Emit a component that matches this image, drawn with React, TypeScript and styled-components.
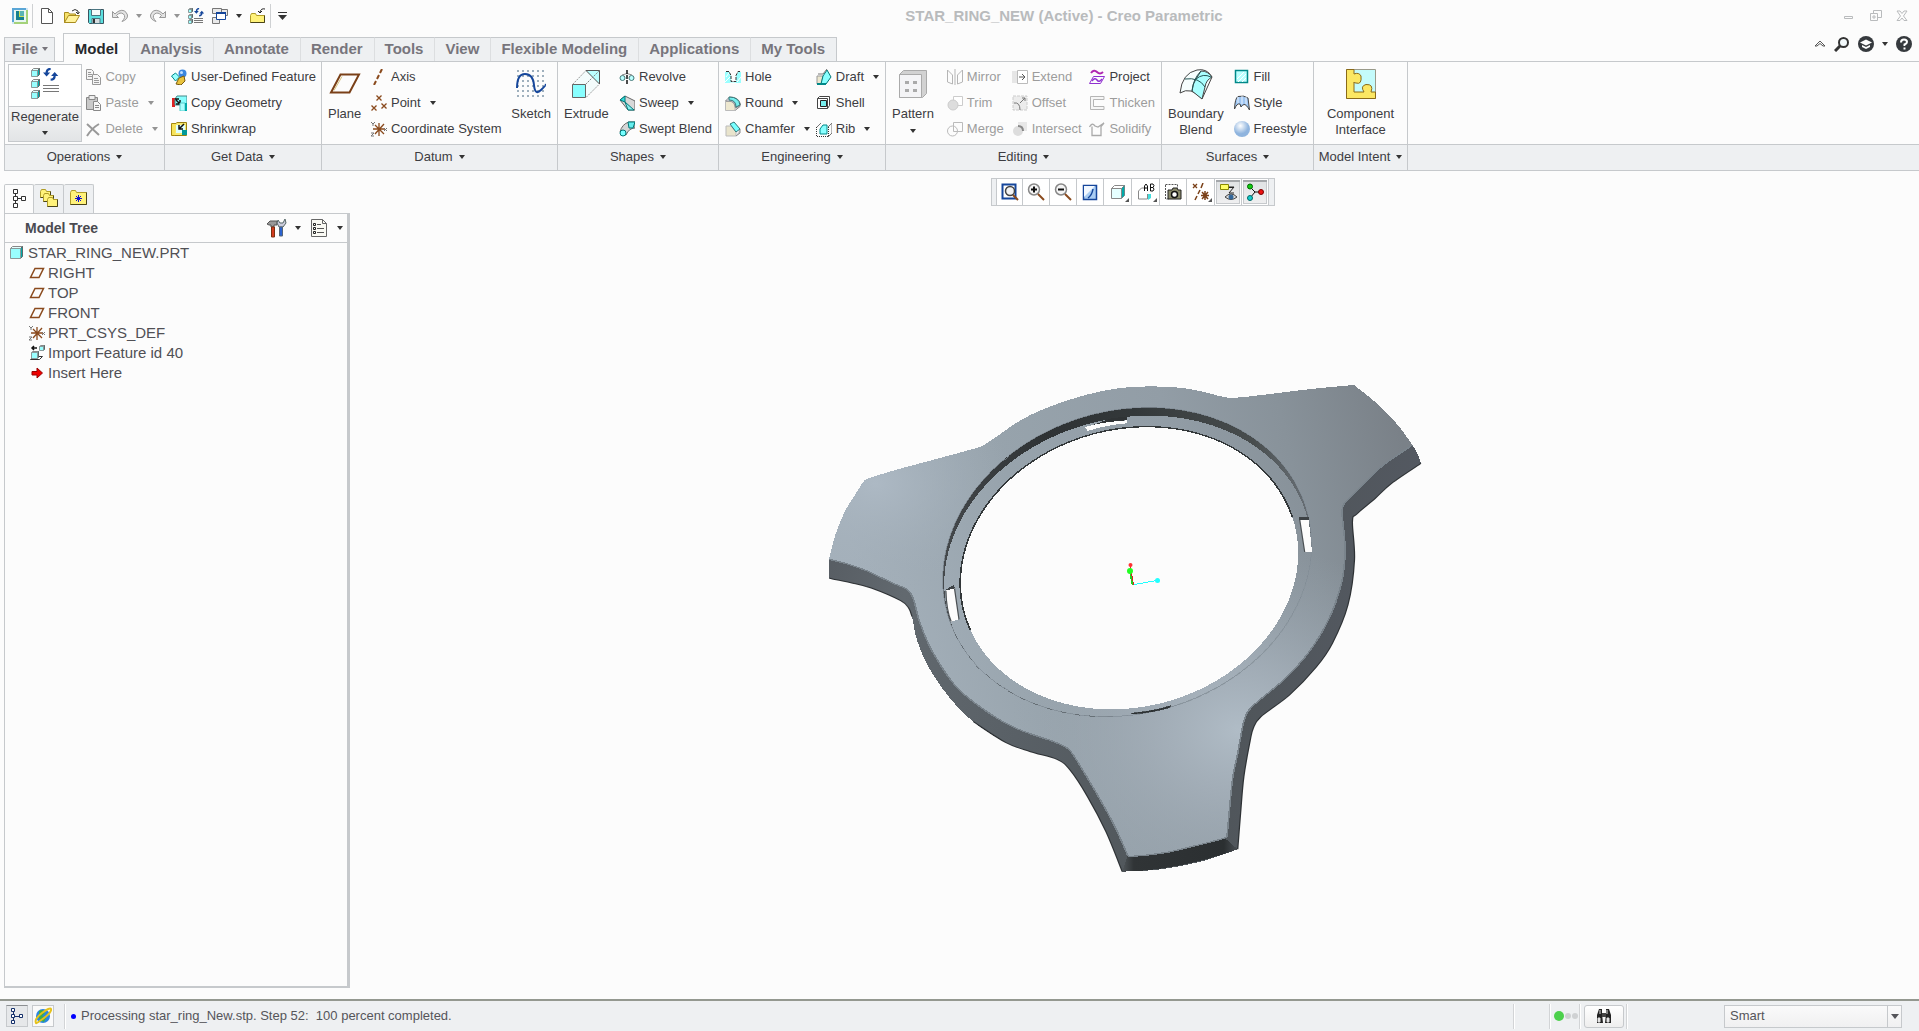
import React from "react";
import styled, { createGlobalStyle, css } from "styled-components";

const color = {
  page: "#fcfcfc",
  band: "#eef0f2",
  line: "#c6c9cc",
  text: "#3d3d42",
  tab: "#77757c",
  faded: "#9c9c9c",
};

const GlobalStyle = createGlobalStyle`
  * { box-sizing: border-box; }
  body { margin: 0; background: ${color.page}; color: ${color.text};
    font-family: "Liberation Sans", Arial, sans-serif; font-size: 13px; line-height: 16px; }
  button { font: inherit; color: inherit; background: none; border: 0; padding: 0; margin: 0; }
  svg { display: block; flex: none; }
`;

/* ---------- drawing helpers ---------- */

type Pt = [number, number];

/** Smooth open curve through points, as the tail of a path that already is at points[0]. */
const through = (p: Pt[]) => {
  let d = "";
  for (let i = 0; i < p.length - 1; i++) {
    const a = p[i - 1] ?? p[i];
    const b = p[i];
    const c = p[i + 1];
    const e = p[i + 2] ?? c;
    d += `C${b[0] + (c[0] - a[0]) / 6} ${b[1] + (c[1] - a[1]) / 6} ${c[0] - (e[0] - b[0]) / 6} ${
      c[1] - (e[1] - b[1]) / 6
    } ${c[0]} ${c[1]}`;
  }
  return d;
};
const edge = (p: Pt[]) => `M${p[0].join(" ")}` + through(p);

/** Closed outline made of smooth runs that meet in sharp corners. */
const outline = (...runs: Pt[][]) =>
  `M${runs[0][0].join(" ")}` + runs.map((r) => `L${r[0].join(" ")}` + through(r)).join("") + "Z";

/** Part of a tilted ellipse, from one angle to another in degrees. */
const arc = (cx: number, cy: number, rx: number, ry: number, skew: number, from: number, to: number): Pt[] => {
  const pts: Pt[] = [];
  for (let a = from; a <= to; a += 5) {
    const t = (a * Math.PI) / 180;
    pts.push([cx + rx * Math.cos(t), cy + ry * Math.cos(t - skew)]);
  }
  return pts;
};
const rimArc = (from: number, to: number) => arc(777, 576, 452, 464, 1.686, from, to);
const ledgeArc = (from: number, to: number) => arc(779, 589, 450, 452, 1.686, from, to);
const holeArc = (from: number, to: number) => arc(782, 594, 414, 424, 1.677, from, to);

const topLeft: Pt[] = [[140, 328], [150, 322], [215, 298], [300, 270], [390, 240], [430, 222], [520, 148], [605, 102], [705, 66], [790, 51], [885, 51], [955, 63], [1010, 80], [1045, 83], [1120, 73], [1220, 58], [1333, 45]];
const rightTip: Pt[] = [[1333, 45], [1393, 105], [1440, 165], [1476, 225]];
const rightCut: Pt[] = [[1476, 225], [1488, 250], [1497, 280]];
const leftTip: Pt[] = [[47, 565], [62, 495], [85, 425], [110, 375], [132, 333], [140, 328]];

const lowerRight: Pt[] = [[1497, 280], [1425, 340], [1385, 385], [1340, 432], [1329, 455], [1334, 570], [1318, 705], [1280, 820], [1240, 892], [1175, 975], [1105, 1040], [1086, 1075], [1078, 1115], [1063, 1220], [1055, 1330], [1048, 1438]];
const foot: Pt[] = [[1048, 1438], [960, 1474], [860, 1498], [765, 1505]];
const lowerLeft: Pt[] = [[765, 1505], [725, 1385], [680, 1280], [637, 1200], [605, 1168], [540, 1145], [480, 1118], [400, 1055], [340, 980], [290, 890], [262, 810], [250, 740], [242, 715], [222, 692], [150, 654], [100, 638], [47, 625]];

const faceRight: Pt[] = [[1476, 225], [1395, 295], [1322, 385], [1307, 405], [1304, 435], [1311, 540], [1302, 640], [1270, 750], [1220, 850], [1160, 930], [1085, 1008], [1064, 1050], [1048, 1150], [1035, 1230], [1022, 1395]];
const faceFoot: Pt[] = [[1022, 1395], [1014, 1405], [935, 1430], [870, 1448], [790, 1459], [778, 1455]];
const faceLeft: Pt[] = [[778, 1455], [745, 1365], [702, 1270], [645, 1155], [627, 1132], [595, 1114], [505, 1075], [430, 1022], [358, 950], [300, 845], [270, 760], [254, 690], [240, 660], [200, 638], [140, 603], [95, 583], [47, 568]];

const bodyPath = outline(topLeft, rightTip, rightCut, lowerRight, foot, lowerLeft, leftTip);
const facePath = outline(topLeft, rightTip, faceRight, faceFoot, faceLeft, leftTip);
const rimPath = outline(rimArc(0, 360));
const ledgePath = outline(ledgeArc(0, 360));
const holePath = outline(holeArc(0, 360));

const Ring = () => (
  <svg width="640" height="520" viewBox="3 0 640 520" shapeRendering="crispEdges" role="img" aria-label="Star ring part">
    <defs>
      <linearGradient id="metal" gradientUnits="userSpaceOnUse" x1="80" y1="420" x2="1440" y2="160">
        <stop offset="0" stopColor="#a5b1bb" />
        <stop offset="0.3" stopColor="#97a3ac" />
        <stop offset="0.6" stopColor="#929da6" />
        <stop offset="0.8" stopColor="#88929a" />
        <stop offset="1" stopColor="#7a8188" />
      </linearGradient>
      <radialGradient id="shine" gradientUnits="userSpaceOnUse" cx="1050" cy="1080" r="560">
        <stop offset="0" stopColor="#b0bcc6" />
        <stop offset="0.35" stopColor="#a5b0ba" stopOpacity="0.8" />
        <stop offset="1" stopColor="#98a3ac" stopOpacity="0" />
      </radialGradient>
      <radialGradient id="glow" gradientUnits="userSpaceOnUse" cx="160" cy="340" r="340">
        <stop offset="0" stopColor="#adb9c4" />
        <stop offset="1" stopColor="#9eaab4" stopOpacity="0" />
      </radialGradient>
      <linearGradient id="side" gradientUnits="userSpaceOnUse" x1="50" y1="600" x2="1400" y2="900">
        <stop offset="0" stopColor="#585e64" />
        <stop offset="0.14" stopColor="#62696f" />
        <stop offset="0.4" stopColor="#596066" />
        <stop offset="0.75" stopColor="#4f5559" />
        <stop offset="1" stopColor="#545962" />
      </linearGradient>
      <linearGradient id="wall" gradientUnits="userSpaceOnUse" x1="330" y1="600" x2="1220" y2="430">
        <stop offset="0" stopColor="#45494c" />
        <stop offset="0.35" stopColor="#2e3234" />
        <stop offset="0.6" stopColor="#33383a" />
        <stop offset="0.9" stopColor="#484d4e" />
        <stop offset="1" stopColor="#666d73" />
      </linearGradient>
      <linearGradient id="foot" gradientUnits="userSpaceOnUse" x1="765" y1="0" x2="1048" y2="0">
        <stop offset="0" stopColor="#50565a" />
        <stop offset="0.1" stopColor="#303436" />
        <stop offset="0.88" stopColor="#2b2f31" />
        <stop offset="1" stopColor="#4a4f54" />
      </linearGradient>
      <clipPath id="inRim"><path d={rimPath} /></clipPath>
    </defs>
    <g transform="scale(0.40816 0.33333)">
      <path d={bodyPath} fill="url(#side)" />
      <path d={edge(lowerRight) + edge(lowerLeft.slice(0, 8)) + edge(lowerLeft.slice(-6))} fill="none" stroke="#2e3235" strokeWidth="3" />
      <path d="M778 1459Q900 1450 1016 1404L1048 1438Q900 1502 765 1505Z" fill="url(#foot)" />
      <path d={facePath} fill="url(#metal)" />
      <path d={facePath} fill="url(#glow)" />
      <path d={facePath} fill="url(#shine)" />
      <path d={edge(faceRight) + through(faceFoot) + through(faceLeft)} fill="none" stroke="#7a848c" strokeWidth="4" />
      <path d={rimPath} fill="url(#wall)" />
      <g clipPath="url(#inRim)">
        <path d={ledgePath} fill="url(#metal)" />
        <path d={ledgePath} fill="url(#shine)" />
      </g>
      <path d={rimPath} fill="none" stroke="#848f98" strokeWidth="2" />
      <path d={edge(rimArc(100, 160))} fill="none" stroke="#5b6369" strokeWidth="2" strokeDasharray="14 22" />
      <path d={edge(rimArc(15, 75))} fill="none" stroke="#8a959d" strokeWidth="3" strokeDasharray="12 12" />
      <path d="M788 1030Q850 1022 884 1007L882 1012Q840 1028 788 1032Z" fill="#2d3133" stroke="#2d3133" strokeWidth="2" />
      <path d={holePath} fill={color.page} />
      <path d={edge(holeArc(-200, -15))} fill="none" stroke="#33383a" strokeWidth="4" />
      <path d="M740 144L777 140V150L677 172Z" fill="#2f3335" />
      <path d="M674 171Q720 155 777 151V160Q730 164 680 183Z" fill={color.page} />
      <path d="M1198 441H1222V450H1198ZM333 658L352 646L355 655L335 664Z" fill="#3d4245" />
      <path d="M1200 450H1222L1230 546H1212Z" fill={color.page} />
      <path d="M333 662L354 655L365 748L346 755Q334 720 333 662Z" fill={color.page} />
      <path d="M333 662Q334 720 346 755M354 655L365 748M1200 450L1212 546" fill="none" stroke="#4b5054" strokeWidth="3" />
    </g>
    <g fill="none">
      <path d="M323.500 215L320.500 196" stroke="#d22" />
      <path d="M322.500 215L320 202" stroke="#2c2" strokeWidth="1.500" />
      <path d="M324 214.500L347 210.500" stroke="#2ff" />
    </g>
    <g shapeRendering="auto">
      <circle cx="320.500" cy="195" r="2" fill="#f33" />
      <circle cx="320" cy="201" r="3" fill="#2f2" />
      <circle cx="347.500" cy="210.500" r="2.500" fill="#2ff" />
    </g>
  </svg>
);

/* ---------- icons ---------- */

const cube = (x: number, y: number, s: number) => {
  const d = Math.max(1, Math.round(s * 0.2));
  const f = s - d;
  return (
    <g>
      <path d={`M${x} ${y + d}l${d} ${-d}h${f}l${-d} ${d}z`} fill="#e4ffff" stroke="#888" />
      <path d={`M${x + f} ${y + d}l${d} ${-d}v${f}l${-d} ${d}z`} fill="#0aa" stroke="#5a6a6a" />
      <path d={`M${x} ${y + d}h${f}v${f}h${-f}z`} fill="#9ff" stroke="#8a9a9a" />
    </g>
  );
};
const lines = (x: number, y: number, w: number, gap: number) => (
  <path d={[0, 1, 2].map((i) => `M${x} ${y + i * gap}h${w}`).join("")} stroke="#777" fill="none" />
);
const cycle = (
  <>
    <path d="M8.500 1Q4 1 4 6M8.500 13Q13 13 13 8" fill="none" stroke="#15469b" strokeWidth="2.500" />
    <path d="M0 5h8L4 9.500zM9 9h8L13 4.500z" fill="#15469b" />
  </>
);
const xs = (pts: Pt[], r: number, c: string) => (
  <path d={pts.map(([x, y]) => `M${x - r} ${y - r}l${2 * r} ${2 * r}M${x + r} ${y - r}l${-2 * r} ${2 * r}`).join("")} stroke={c} strokeWidth="1.300" fill="none" />
);
const folder = (x: number, y: number, w: number, h: number) => (
  <>
    <path d={`M${x} ${y + 2}l1-2h4l1 2h${w - 6}v${h - 2}h${-w}z`} fill="#fff27a" stroke="#b09c28" />
    <path d={`M${x} ${y + h}h${w}v${2 - h}`} fill="none" stroke="#4a4418" />
  </>
);

const glyphs = {
  app: [16, 16, <><path d="M0 0h16v16H0z" fill="#cfe6f5" /><path d="M0 0h14v14H0z" fill="#5aa6d6" /><path d="M2 2h14v14H2z" fill="#a4d27a" /><path d="M2 2h12v12H2z" fill="#e8f6f2" /><path d="M4 3h8v9H4z" fill="#16808f" /><path d="M7 3h5v6H7z" fill="#c9e05a" /><path d="M8 3h4v5H8z" fill="#58b4b4" /></>],
  newFile: [16, 16, <path d="M1.500.5h7l4 4v11h-11zM8.500.5v4h4" fill="#fff" stroke="#555" />],
  open: [16, 16, <><path d="M.5 14.500v-10h4l1 1.500h6v8z" fill="#f7e26b" stroke="#a88b1e" /><path d="M.5 14.500l4-7h11l-4 7z" fill="#fff29b" stroke="#a88b1e" /><path d="M8 3q3-3 6 0v2m-2-1l2 2 1.500-2" fill="none" stroke="#333" /></>],
  save: [16, 16, <><path d="M.5 1.500h15v14h-14l-1-1z" fill="#5ce0e0" stroke="#3b5560" /><path d="M3.500 1.500h9v6h-9z" fill="#f4fbfb" stroke="#4a7480" /><path d="M4 10.500h8v5H4z" fill="#d6dde0" stroke="#4a7480" /><path d="M6 11v4" stroke="#333" strokeWidth="2" /></>],
  undo: [16, 16, <path d="M.5 3.500v6h6L4.500 7.500Q8 3.500 11.500 6q3 3-1.500 7.500 6-2 5.500-6.500Q13 .5 7 3 5 4 3 6z" fill="#e4e4e4" stroke="#999" />],
  redo: [16, 16, <path d="M15.500 3.500v6h-6l2-2Q8 3.500 4.500 6q-3 3 1.500 7.500Q0 11.500.5 7 3 .5 9 3q2 1 4 3z" fill="#e4e4e4" stroke="#999" />],
  regenSmall: [16, 16, <>{cube(0.5, 0.5, 4)}{cube(0.5, 6.5, 4)}{cube(0.5, 11.500, 4)}<g transform="translate(6 0) scale(.6)">{cycle}</g>{lines(6, 10.500, 9, 2)}</>],
  windows: [16, 16, <g fill="#e9e9e9" stroke="#777"><path d="M.5.5h9v5h-9zM9.500 1.500h6v6h-6zM.5 9.500h7v6h-7z" /><path d="M4.500 4.500h9v7h-9z" stroke="#15469b" fill="#fff" /><path d="M4 5h10" stroke="#15469b" strokeWidth="2" /></g>],
  closeFolder: [16, 16, <>{folder(0.5, 5.500, 14, 9)}<path d="M15 1Q11 0 10 4M8 3l2 2 2-2" fill="none" stroke="#222" /></>],
  customize: [10, 10, <><path d="M0 1.500h9" stroke="#333" /><path d="M0 4h9L4.500 9z" fill="#333" /></>],
  minimize: [12, 12, <path d="M1.500 6.500h8v2h-8z" fill="none" stroke="#b9bbbd" />],
  restore: [12, 12, <path d="M3.500 3V.5h8v7H8M.5 3.500h7v7h-7zM3 6h2v2H3z" fill="none" stroke="#b9bbbd" />],
  close: [12, 12, <path d="M1 1h3l2 2.500L8 1h3L7.500 6l3.500 4.500H8L6 8l-2 2.500H1L4.500 6z" fill="none" stroke="#b9bbbd" />],
  chevron: [12, 8, <path d="M1 6l5-5 5 5H9L6 3.500 3 6z" fill="none" stroke="#555" />],
  search: [16, 16, <><circle cx="9.500" cy="6.500" r="4.500" fill="#f3f9fb" stroke="#333" strokeWidth="2" /><path d="M6 10l-5 5" stroke="#333" strokeWidth="3" /></>],
  learn: [16, 16, <><circle cx="8" cy="8" r="8" fill="#363a3e" /><path d="M2 6.500l6-3 6 3-6 3z" fill="#fff" /><path d="M4 9l4 2 4-2v2l-4 2-4-2z" fill="#fff" /></>],
  help: [16, 16, <><circle cx="8" cy="8" r="8" fill="#363a3e" /><path d="M5 6.500Q5 3.500 8 3.500t3 2.500Q11 7.500 8.500 8.500V10" fill="none" stroke="#fff" strokeWidth="2" /><path d="M7.500 11.500h2v2h-2z" fill="#fff" /></>],
  regenerate: [30, 32, <>{cube(1.5, 0.500, 8)}{cube(1.5, 11.500, 8)}{cube(1.5, 22.500, 8)}<g transform="translate(13 0) scale(.9)">{cycle}</g>{lines(13, 17.500, 16, 3)}</>],
  copy: [16, 16, <g fill="#f5f5f5" stroke="#999"><path d="M1.500.5h5l2 2v8h-7zM3 3.500h3M3 5.500h4M3 7.500h4" /><path d="M7.500 5.500h5l3 3v7h-8zM9 9.500h4M9 11.500h5M9 13.500h5" /></g>],
  paste: [16, 16, <g stroke="#888"><path d="M1.500 2.500h11v12h-11z" fill="#c9c9c9" /><path d="M4 .5h6v4H4z" fill="#eee" /><path d="M8.500 6.500h4l3 3v6h-7zM10 10.500h4M10 12.500h4" fill="#f6f6f6" /></g>],
  delete: [16, 16, <path d="M2 3l12 11M14 3Q7 7 2 15" stroke="#999" strokeWidth="2" fill="none" />],
  udf: [16, 16, <><circle cx="11.500" cy="4.500" r="4" fill="#3a86e0" /><circle cx="10.500" cy="3.500" r="1.500" fill="#bfe0ff" /><path d="M.5 7l4-3 4 4-4 4z" fill="#9ff" stroke="#088" /><path d="M8 9l5-2 1 5-4 4-5-1z" fill="#e9c33d" stroke="#7a5a10" /></>],
  copyGeom: [16, 16, <><path d="M1 3h3v9H1z" fill="#d22" /><path d="M4 4l2-3h10v9H4z" fill="#8ff" stroke="#488" /><path d="M4 4h4M5 5l4 4M9 5v4H5" stroke="#111" strokeWidth="1.500" fill="none" /><path d="M9 8h5v8H9z" fill="#aff" stroke="#5cc" /><path d="M14 8h2v8h-2z" fill="#0aa" /></>],
  shrink: [16, 16, <><path d="M.5 2.500h9v12h-9z" fill="#f6e35a" stroke="#a5890e" /><path d="M5.500 1.500h10v13h-12" fill="#f8e96f" stroke="#997f10" /><path d="M5 4h9v8H5z" fill="#dff" /><path d="M13 3L8 8M8 4v4h4" stroke="#111" strokeWidth="1.500" fill="none" /><path d="M11 9h5v5h-5z" fill="#099" /></>],
  plane: [32, 32, <><path d="M2 24.500L11.500 6.500H30L20.500 24.500Z" fill="none" stroke="#7a4018" strokeWidth="2" /><path d="M5 22.500L13 8.500" stroke="#d8c27a" /></>],
  axis: [16, 16, <path d="M11 0L9 4M8 6L6 10M5 12L3 16" stroke="#8a4a1d" strokeWidth="2" fill="none" />],
  point: [16, 16, xs([[8, 3], [3, 13], [13, 11]], 2.500, "#8a4a1d")],
  csys: [16, 16, <><path d="M8 2v13M2 8h12M4 4l9 9M13 3L4 13" stroke="#8a4a1d" strokeWidth="1.300" fill="none" /><path d="M0 1l2 2 2-2M2 3v2M0 12h3l-3 3h3M13 7l3 3M16 7l-3 3" stroke="#777" fill="none" /></>],
  sketch: [30, 30, <><path d={[1, 6, 11, 16, 21, 26].map((y) => `M1 ${y + 1}H30`).join("")} stroke="#9fb0bd" strokeWidth="2" strokeDasharray="2 3" fill="none" /><path d="M1 19Q1 5 9 5T18 16t7 5 4-5" fill="none" stroke="#15469b" strokeWidth="2" /></>],
  extrude: [32, 32, <><path d="M2.500 16.500L16 2.500H29.500V16L15.500 30" fill="#f4fcfc" stroke="#999" strokeDasharray="2 1" /><path d="M16 2.500h13.500V16z" fill="#bff" stroke="#555" /><path d="M15.500 16.500L29 3" stroke="#888" strokeDasharray="2 1" /><path d="M2.500 16.500h13v13h-13z" fill="#8ff" stroke="#666" /></>],
  revolve: [16, 16, <><circle cx="3.500" cy="9" r="2.500" fill="#bff" stroke="#477" /><circle cx="12.500" cy="9" r="2.500" fill="#bff" stroke="#477" /><path d="M3 6q5-3 10 0" fill="none" stroke="#888" /><path d="M8 1v15" stroke="#111" strokeDasharray="4 1" strokeWidth="1.500" /></>],
  sweep: [16, 16, <><path d="M1 5l5-4 10 5v9H9z" fill="#d8d8d8" stroke="#666" /><path d="M1 5l5-4v6z" fill="#3dd" stroke="#077" /><path d="M6 7l9 8h-6z" fill="#8ee" stroke="#077" /></>],
  sweptBlend: [16, 16, <><path d="M1 11Q3 3 10 1h6v6q-6 0-9 7z" fill="#d5d5d5" stroke="#666" /><path d="M9 1h7l-2 6h-4z" fill="#6ee" stroke="#077" /><circle cx="4" cy="12" r="3" fill="#7ff" stroke="#077" /></>],
  hole: [16, 16, <><path d="M0 3h4l2 4v6h5V7l2-4h3v11H0z" fill="#9ff" /><path d="M0 13L5 8M1 8l3-4M12 13l4-5M5 14h6" stroke="#fff" /><path d="M1 2.500h3l2 4v6h5v-6l2-4h3" stroke="#333" strokeDasharray="3 1" fill="none" /></>],
  round: [16, 16, <><path d="M10 15.500l5-4V8" fill="#ccc" stroke="#888" /><path d="M.5 6.500H6q4 1 4 6v3H.5z" fill="#eee8d0" stroke="#bbb" /><path d="M.5 6l4-4q10 0 11 8l-5 3Q10 6 4 6z" fill="#eef" stroke="#888" /><path d="M4 2q10 0 11 8l-4 2Q11 5 4 5z" fill="#7ee" stroke="#377" /></>],
  chamfer: [16, 16, <><path d="M1 5h5l5 6v4H1z" fill="#e9e4cc" stroke="#bbb" /><path d="M11 15l4-3V8" fill="#ccc" stroke="#888" /><path d="M5 3l4-2 6 7-4 3z" fill="#7ff" stroke="#377" /></>],
  draft: [16, 16, <><path d="M1 7h6l-2 8H1z" fill="#ece7cf" stroke="#999" /><path d="M7 7l4-6 4 7-5 7H5z" fill="#8ff" stroke="#077" /><path d="M2 5h5l4-5" fill="none" stroke="#777" /><path d="M1 15h9" stroke="#088" strokeWidth="2" /></>],
  shell: [16, 16, <><path d="M1.500 3.500l2-2h10v9l-2 3h-10z" fill="#fff" stroke="#444" /><path d="M4.500 5.500h6v6h-6z" fill="#7ee" stroke="#222" /><path d="M1.500 3.500h10v10" fill="none" stroke="#444" /></>],
  rib: [16, 16, <><path d="M1 6l4-4M12 6l4-4v10l-4 4" stroke="#777" fill="none" /><path d="M4 8l3-4h4v9H4z" fill="#8ff" stroke="#088" /><path d="M.5 6v9.500h12V6" stroke="#333" fill="none" strokeDasharray="1 1" /></>],
  pattern: [30, 32, <><path d="M1.500 6.500l4-4h23v23l-4 4h-23z" fill="#d2d2d2" stroke="#aaa" /><path d="M1.500 6.500h22v23h-22z" fill="#f4f4f6" stroke="#aaa" /><path d="M7 13h4v3H7zM15 13h4v3h-4zM7 21h4v3H7zM15 21h4v3h-4z" fill="#aaa" /></>],
  mirror: [16, 16, <path d="M.5 1v12l5 2V6zM15.500 1v12l-5 2V6zM8 0v16" fill="none" stroke="#b5b5b5" />],
  trim: [16, 16, <g stroke="#ccc"><path d="M6.500 1.500h9v9h-9z" fill="#fff" /><circle cx="6" cy="10" r="5" fill="#ddd" /></g>],
  merge: [16, 16, <g stroke="#bbb" fill="none"><path d="M6.500 1.500h9v9h-9z" /><circle cx="5.500" cy="10" r="5" /></g>],
  extend: [16, 16, <><path d="M0 2h5v12H0z" fill="#e6e6e6" /><path d="M5.500 1.500h10v13h-10z" fill="#fff" stroke="#bbb" /><path d="M7 8h6M10 5l3 3-3 3" stroke="#555" fill="none" /></>],
  offset: [16, 16, <><path d="M1 1h14v14H1z" fill="#ececec" stroke="#ccc" strokeDasharray="3 1" /><path d="M2 8q6-1 6 7M8 8l5-5M10 3h3v3" stroke="#777" fill="none" /></>],
  intersect: [16, 16, <><path d="M6 1h9v9H6z" fill="#e8e8e8" /><circle cx="6" cy="10" r="5" fill="#ddd" /><path d="M6 5q5 0 5 5" stroke="#888" strokeWidth="2" fill="none" /></>],
  project: [16, 16, <g fill="none"><path d="M2 4q3-4 6-1t6 0" stroke="#b028b0" strokeWidth="2" /><path d="M4.500 7.500h11l-4 7h-11z" stroke="#9030d0" /><path d="M3 12q3-4 5-1t5-1" stroke="#9030d0" strokeWidth="1.500" /></g>],
  thicken: [16, 16, <path d="M15 1.500H1.500v13H15v-3H4.500v-7H15z" fill="#f6f6f6" stroke="#b5b5b5" />],
  solidify: [16, 16, <path d="M.5 6Q3 1 6 5l3 1 6-4-3 3.500v9h-9v-9" fill="none" stroke="#aaa" strokeWidth="1.300" />],
  boundary: [34, 32, <g stroke="#444"><path d="M1 25Q3 5 18 2Q28 0 33 9L23 31Q12 18 1 25z" fill="#f6fefe" /><path d="M22 3Q29 3 33 9 27 12 26 19L23 31 13 23Q14 15 17 11z" fill="#aff" /><path d="M6 11Q20 9 26 19M13 23Q14 11 22 3M17 11Q24 5 32 9" fill="none" stroke="#255" /></g>],
  fill: [16, 16, <><path d="M1.500 1.500h12v12h-12z" fill="#bff" stroke="#088" strokeWidth="1.500" /><path d="M3 10l7-7M4 13l8-8M8 13l4-4" stroke="#fff" fill="none" /></>],
  style: [16, 16, <><path d="M.5 14Q1 3 4 1.500Q10 0 14 3l1.500 12Q12 9 10 9.500T7 12L6 9Q3 8 .5 14z" fill="#9fc6f2" stroke="#444" /><path d="M4 2v6M8 1v8M12 2v7" stroke="#e7f2ff" fill="none" /></>],
  freestyle: [16, 16, <><defs><radialGradient id="ball" cx=".4" cy=".3"><stop offset="0" stopColor="#fff" /><stop offset="1" stopColor="#8fb4de" /></radialGradient></defs><circle cx="8" cy="8" r="8" fill="url(#ball)" /></>],
  component: [32, 32, <><path d="M1.500 1.500h29v29h-29z" fill="#c4fbfb" stroke="#9a9a8a" /><path d="M1.500 1.500H9V6q5-2 7 2 1 9-5 7-2 0-2-1v10h10q-4-6 2-7.500 8-.5 5 7.500h4.500v6.500h-29z" fill="#fbe763" stroke="#8a6a18" /></>],
  zoomFit: [18, 18, <><path d="M1.500 1.500h13v14h-13z" fill="#fff" stroke="#15469b" strokeWidth="2" /><circle cx="9" cy="8" r="4.500" fill="#f4f4f4" stroke="#444" strokeWidth="1.500" /><path d="M12 12l5 5" stroke="#8a4a1d" strokeWidth="2" /></>],
  zoomIn: [18, 18, <><circle cx="7" cy="6.500" r="5.500" fill="#f4f4f4" stroke="#888" strokeWidth="1.500" /><path d="M4 6.500h6M7 3.500v6" stroke="#111" strokeWidth="2" /><path d="M11 11l6 6" stroke="#8a4a1d" strokeWidth="2" /></>],
  zoomOut: [18, 18, <><circle cx="7" cy="6.500" r="5.500" fill="#f4f4f4" stroke="#888" strokeWidth="1.500" /><path d="M4 6.500h6" stroke="#111" strokeWidth="2" /><path d="M11 11l6 6" stroke="#8a4a1d" strokeWidth="2" /></>],
  repaint: [18, 18, <><path d="M2.500 2.500h13v14h-13z" fill="#a9cdf3" stroke="#15469b" strokeWidth="1.500" /><path d="M3 3h11L3 14z" fill="#f2f8ff" /><path d="M12 6q-1 6-5 9" stroke="#15469b" strokeWidth="1.500" fill="none" /></>],
  display: [18, 18, <><path d="M2.500 5.500l3-3h10l-3 3z" fill="#fff" stroke="#888" /><path d="M12.500 5.500l3-3v10l-3 3z" fill="#0aa" stroke="#688" /><path d="M2.500 5.500h10v10h-10z" fill="#e6ffff" stroke="#888" /></>],
  saved: [18, 18, <><path d="M1.500 8l3-3h4M1.500 8v8h9v-5" fill="#fff" stroke="#888" /><path d="M11 11h3v4l-3 2z" fill="#4dd" /><path d="M7.500 8V3L9 1l1.500 2v5M8 5h3M13.500 1v7h2.500q2-2 0-3.500h-2 2q2-2 0-3.500z" fill="none" stroke="#111" /></>],
  camera: [18, 18, <><path d="M1.500 2v14h4M1.500 1.500h12v4" fill="none" stroke="#555" strokeDasharray="2 1" /><path d="M4 7h4l1-2h4l1 2h3v9H4z" fill="#8b8b6b" stroke="#222" /><circle cx="10.500" cy="11.500" r="3" fill="#fff" stroke="#111" strokeWidth="1.500" /></>],
  datums: [18, 18, <><path d="M11 0L9 5M8 7L6 11M5 13l-2 4M13 8v9M9 12.500h8M10 9l6 7M16 9l-6 7" stroke="#7a4018" strokeWidth="1.500" fill="none" />{xs([[3, 3]], 2, "#7a4018")}</>],
  annotation: [18, 18, <><path d="M1.500 1.500h8v5h-8z" fill="#ff6" stroke="#880" /><path d="M10 4.500h5M10 4h5l-5 6h5" stroke="#222" fill="none" /><path d="M6 14q6-6 12 0-6 5-12 0z" fill="#ddd" stroke="#444" /><circle cx="12" cy="14" r="2.500" fill="#369" /></>],
  spin: [18, 18, <><path d="M4 4l5 5h6M9 9l-5 6" stroke="#111" fill="none" /><circle cx="4" cy="3.500" r="2.500" fill="#1c1" stroke="#060" /><circle cx="15" cy="9" r="2.500" fill="#e11" stroke="#700" /><circle cx="4" cy="15" r="2.500" fill="#1cc" stroke="#066" /></>],
  tree: [14, 20, <g fill="#fff" stroke="#333"><path d="M3.500 4v12M3.500 9.500h6" /><path d="M1.500.5h4v4h-4zM1.500 7.500h4v4h-4zM9.500 7.500h4v4h-4zM1.500 14.500h4v4h-4z" /></g>],
  treeSmall: [12, 16, <g fill="#fff" stroke="#15306b"><path d="M2.500 3v10M3 8.500h6" /><path d="M.5.5h3v3h-3zM.5 6.500h3v3h-3zM8.500 6.500h3v3h-3zM.5 12.500h3v3h-3z" /></g>],
  folders: [18, 20, <>{folder(0.5, 1.500, 10, 8)}{folder(3.500, 5.500, 10, 8)}{folder(7.500, 9.500, 10, 9)}</>],
  favorites: [18, 18, <>{folder(0.500, 1.500, 16, 14)}<path d="M8.500 6v7M5 9.500h7M6 7l5 5M11 7l-5 5" stroke="#11c" fill="none" /></>],
  tools: [20, 20, <><path d="M0 6l3-3h7v4H7v2H4V7H2z" fill="#999" stroke="#555" /><path d="M4.500 9h3v10h-3z" fill="#d33b1e" stroke="#7a3010" /><path d="M11 2l2 3h3l2-4 1 4-3 4h-4L10 5z" fill="#ccd" stroke="#566" /><path d="M12.500 9h3v9h-3z" fill="#2a62d0" stroke="#567" /></>],
  options: [18, 20, <><path d="M1.500 1.500h11l4 4v13h-15z" fill="#fafaf4" stroke="#666" /><path d="M12.500 1.500v4h4" fill="none" stroke="#666" /><path d="M7 6.500h4M7 10.500h7M7 14.500h7" stroke="#555" /><path d="M3.500 5.500h2v2h-2zM3.500 9.500h2v2h-2zM3.500 13.500h2v2h-2z" fill="none" stroke="#222" /></>],
  part: [14, 14, cube(0.500, 0.500, 12)],
  datumPlane: [16, 12, <path d="M1.500 10.500L6 1.500h8.500L10 10.500z" fill="none" stroke="#8a4a1d" strokeWidth="1.500" />],
  importFeature: [16, 16, <><path d="M1.500 14.500h9l3-3h-9z" fill="#fff" stroke="#333" />{cube(2.500, 6.500, 7)}{cube(10.500, 0.500, 5)}<path d="M3 3h5M5 1L3 3l2 2" stroke="#111" strokeWidth="1.500" fill="none" /></>],
  insert: [12, 12, <path d="M1 4.500h5V1l5.500 5L6 11V8H1z" fill="#e00" stroke="#900" />],
  browser: [18, 18, <><circle cx="9" cy="9" r="7" fill="#2a86e0" /><path d="M5 4q5-2 6 2l-3 3 4 2-2 4q-4-1-5-5z" fill="#3cb043" /><path d="M2 16Q0 12 8 6t9-4q1 3-7 9t-8 5z" fill="none" stroke="#e5c21a" strokeWidth="2" /></>],
  find: [16, 16, <><path d="M3 1h3v5l1 9H1V7zM10 1h3l2 6v8H9l1-9z" fill="#222" /><path d="M6 5h4v4H6z" fill="#444" /><path d="M2 10h2v4H2zM11 10h2v4h-2zM4 2v4M11 2v4" fill="#eee" stroke="#ddd" /></>],
} as const;

type GlyphName = keyof typeof glyphs;
const Icon = ({ name }: { name: GlyphName }) => {
  const [w, h, art] = glyphs[name];
  return (
    <svg width={w} height={h} viewBox={`0 0 ${w} ${h}`} aria-hidden="true">
      {art as React.ReactNode}
    </svg>
  );
};

const Caret = styled.span<{ $faded?: boolean }>`
  flex: none;
  border: 3px solid transparent;
  border-top: 4px solid ${(p) => (p.$faded ? "#949494" : "#333")};
  border-bottom: 0;
`;

/* ---------- layout ---------- */

const Shell = styled.div`
  display: flex;
  flex-direction: column;
  min-height: 100vh;
`;

const TitleBar = styled.header`
  display: flex;
  align-items: center;
  height: 32px;
  padding: 0 4px 0 8px;
`;
const IconButton = styled.button<{ $w?: number }>`
  display: flex;
  align-items: center;
  justify-content: center;
  width: ${(p) => p.$w ?? 24}px;
  height: 24px;
`;
const Rule = styled.span`
  width: 1px;
  height: 24px;
  margin-right: 3px;
  background: #cfd1d3;
`;
const Title = styled.h1`
  flex: 1;
  margin: 0;
  text-align: center;
  font-size: 15px;
  line-height: 20px;
  color: #b9bbbd;
`;

const TabRow = styled.nav`
  display: flex;
  align-items: flex-end;
  height: 30px;
  margin-left: 4px;
  border-bottom: 1px solid ${color.line};
`;
const Tab = styled.button<{ $active?: boolean; $file?: boolean }>`
  display: flex;
  align-items: center;
  gap: 4px;
  height: 24px;
  padding: 0 11px 2px 10px;
  font-size: 15px;
  font-weight: bold;
  color: ${color.tab};
  background: ${color.band};
  border-top: 1px solid ${color.line};
  border-right: 1px solid #dcdee0;
  ${(p) =>
    p.$file &&
    css`
      padding: 0 6px 2px 7px;
      margin-right: 8px;
      border: 1px solid ${color.line};
      border-bottom: 0;
      & > ${Caret} { border-top-color: ${color.tab}; }
    `}
  ${(p) =>
    p.$active &&
    css`
      height: 29px;
      margin-bottom: -1px;
      padding: 2px 11px 0 11px;
      color: #26282b;
      background: ${color.page};
      border: 1px solid ${color.line};
      border-bottom: 0;
    `}
  &:nth-last-of-type(1) { border-right-color: ${color.line}; }
`;
const TabTools = styled.div`
  display: flex;
  align-self: flex-start;
  margin-left: auto;
  padding-right: 3px;
`;

const Ribbon = styled.section`
  display: flex;
  height: 109px;
  margin-left: 4px;
  border-left: 1px solid ${color.line};
  border-bottom: 1px solid ${color.line};
`;
const GroupBox = styled.div<{ $w: number }>`
  display: flex;
  flex: none;
  flex-direction: column;
  width: ${(p) => p.$w}px;
  border-right: 1px solid ${color.line};
`;
const GroupBody = styled.div<{ $tight?: boolean; $center?: boolean }>`
  display: flex;
  justify-content: ${(p) => (p.$center ? "center" : "space-between")};
  height: 82px;
  padding: 2px 6px 0 ${(p) => (p.$tight ? 3 : 6)}px;
`;
const GroupLabel = styled.button`
  display: flex;
  align-items: center;
  justify-content: center;
  gap: 6px;
  flex: 1;
  width: 100%;
  padding-bottom: 1px;
  background: ${color.band};
  border-top: 1px solid ${color.line};
  white-space: nowrap;
`;
const GroupFill = styled.div`
  flex: 1;
  margin-top: 82px;
  background: ${color.band};
  border-top: 1px solid ${color.line};
`;
const Stack = styled.div`
  display: flex;
  flex-direction: column;
`;
const SmallButton = styled.button`
  display: flex;
  align-items: center;
  gap: 4px;
  height: 26px;
  white-space: nowrap;
  &:disabled { color: ${color.faded}; }
  & > ${Caret} { margin-left: 5px; }
`;
const BigButton = styled.button<{ $menu?: boolean }>`
  display: flex;
  flex-direction: column;
  align-items: center;
  height: 78px;
  margin-right: ${(p) => (p.$menu ? 5 : 0)}px;
  padding-top: 4px;
  & > ${Caret} { margin-top: 7px; }
`;
const BigArt = styled.span`
  display: flex;
  align-items: center;
  height: 32px;
  margin-bottom: 6px;
`;
const SplitButton = styled.button`
  display: flex;
  flex-direction: column;
  align-items: center;
  width: 74px;
  height: 78px;
  padding-top: 2px;
  border: 1px solid ${color.line};
  background: linear-gradient(#fff 41px, ${color.line} 41px, ${color.line} 42px, #f5f5f6 42px, #e2e4e6);
  & > ${BigArt} { margin-bottom: 8px; height: 34px; }
  & > ${Caret} { margin-top: 6px; }
`;

const Main = styled.main`
  display: flex;
  flex: 1;
`;
const Side = styled.aside`
  display: flex;
  flex-direction: column;
  width: 346px;
  margin: 13px 0 11px 4px;
`;
const SideTabs = styled.div`
  display: flex;
  height: 29px;
`;
const SideTab = styled.button<{ $active?: boolean }>`
  display: flex;
  align-items: center;
  justify-content: center;
  width: 30px;
  height: ${(p) => (p.$active ? 30 : 29)}px;
  padding-bottom: 2px;
  background: ${(p) => (p.$active ? color.page : color.band)};
  border: 1px solid ${color.line};
  border-left-width: ${(p) => (p.$active ? 1 : 0)}px;
  border-bottom: 0;
  border-radius: 2px 2px 0 0;
`;
const Panel = styled.div`
  flex: 1;
  border: 1px solid ${color.line};
  border-right-width: 3px;
  border-bottom-width: 2px;
`;
const PanelHead = styled.div`
  display: flex;
  align-items: center;
  height: 29px;
  padding-left: 20px;
  border-bottom: 1px solid ${color.line};
`;
const PanelTitle = styled.h2`
  flex: 1;
  margin: 0;
  font-size: 14px;
  color: #4a4a50;
`;
const Tree = styled.ul`
  list-style: none;
  margin: 0;
  padding: 0;
`;
const TreeRow = styled.li<{ $level: number }>`
  display: flex;
  align-items: center;
  gap: 3px;
  height: 20px;
  padding-left: ${(p) => 4 + p.$level * 20}px;
  font-size: 15px;
  line-height: 20px;
  color: #505055;
`;
const TreeArt = styled.span`
  display: flex;
  justify-content: center;
  width: 16px;
`;

const Canvas = styled.section`
  display: flex;
  flex: 1;
  flex-direction: column;
  align-items: center;
  padding: 7px 3px 0 0;
`;
const ViewBar = styled.div`
  display: flex;
  height: 28px;
  margin-bottom: 164px;
  padding: 0 5px 0 4px;
  background: ${color.band};
  border: 1px solid ${color.line};
`;
const ViewButton = styled.button<{ $on?: boolean; $menu?: boolean }>`
  position: relative;
  display: flex;
  align-items: center;
  justify-content: center;
  width: ${(p) => (p.$menu ? 28 : 27)}px;
  background: #fff;
  border-right: 1px solid ${color.line};
  &:first-child { border-left: 1px solid ${color.line}; }
  ${(p) =>
    p.$on &&
    css`
      background: linear-gradient(#dfe1e3, #f0f0f1);
      box-shadow: inset 0 0 0 1px #fff, inset 0 2px 0 1px #a4a7aa, inset 0 0 0 2px #c6c9cc;
    `}
`;
const Corner = styled.span`
  position: absolute;
  right: 2px;
  bottom: 3px;
  border: 2px solid #555;
  border-top-color: transparent;
  border-left-color: transparent;
`;

const StatusBar = styled.footer`
  display: flex;
  align-items: center;
  height: 32px;
  padding: 0 17px 0 6px;
  background: ${color.band};
  border-top: 2px solid #949890;
`;
const StatusToggle = styled.button<{ $on?: boolean }>`
  display: flex;
  align-items: center;
  justify-content: center;
  width: 22px;
  height: 22px;
  margin: 0 4px 0 0;
  background: ${(p) => (p.$on ? "#e6e8ea" : "#fafafa")};
  border: 1px solid ${color.line};
  border-top-color: ${(p) => (p.$on ? "#8c8f92" : color.line)};
`;
const StatusRule = styled.span<{ $after: number; $before?: number }>`
  width: 2px;
  height: 25px;
  margin-left: ${(p) => p.$before ?? 0}px;
  margin-right: ${(p) => p.$after}px;
  border-left: 1px solid #d2d4d6;
  border-right: 1px solid #fff;
`;
const Message = styled.p`
  flex: 1;
  display: flex;
  align-items: center;
  gap: 5px;
  margin: 0;
  color: #55555a;
  white-space: pre;
  &::before {
    content: "";
    width: 5px;
    height: 5px;
    border-radius: 3px;
    background: #00f;
  }
`;
const Light = styled.span<{ $on?: boolean }>`
  width: ${(p) => (p.$on ? 10 : 6)}px;
  height: ${(p) => (p.$on ? 10 : 6)}px;
  margin-right: 1px;
  border-radius: 50%;
  background: ${(p) => (p.$on ? "#4cd04c" : "#cfd1d3")};
`;
const FindButton = styled.button`
  display: flex;
  align-items: center;
  justify-content: center;
  width: 40px;
  height: 23px;
  margin: 0 2px;
  background: linear-gradient(#fff, #eee);
  border: 1px solid ${color.line};
  border-radius: 3px;
`;
const Picker = styled.label`
  position: relative;
  display: block;
  width: 178px;
  margin-left: 96px;
`;
const PickerSelect = styled.select`
  appearance: none;
  display: block;
  width: 100%;
  height: 23px;
  padding: 0 20px 0 5px;
  font: inherit;
  color: #55555a;
  background: linear-gradient(#fafafa, #f0f0f1);
  border: 1px solid ${color.line};
  border-radius: 0;
`;
const PickerArrow = styled.span`
  position: absolute;
  top: 1px;
  right: 1px;
  display: flex;
  align-items: center;
  justify-content: center;
  width: 14px;
  height: 21px;
  border-left: 1px solid ${color.line};
  pointer-events: none;
  & > ${Caret} { border-width: 5px 4px 0; border-top-color: #55555a; }
`;

/* ---------- data ---------- */

type Cmd = { icon: GlyphName; text: string; menu?: boolean; off?: boolean };
const c = (icon: GlyphName, text: string, opt = ""): Cmd => ({
  icon,
  text,
  menu: opt.includes("m"),
  off: opt.includes("x"),
});

const tabs = ["Model", "Analysis", "Annotate", "Render", "Tools", "View", "Flexible Modeling", "Applications", "My Tools"];

const viewTools: { icon: GlyphName; label: string; menu?: boolean; on?: boolean }[] = [
  { icon: "zoomFit", label: "Refit" },
  { icon: "zoomIn", label: "Zoom In" },
  { icon: "zoomOut", label: "Zoom Out" },
  { icon: "repaint", label: "Repaint" },
  { icon: "display", label: "Display Style", menu: true },
  { icon: "saved", label: "Saved Orientations", menu: true },
  { icon: "camera", label: "View Manager" },
  { icon: "datums", label: "Datum Display", menu: true },
  { icon: "annotation", label: "Annotation Display", on: true },
  { icon: "spin", label: "Spin Center", on: true },
];

const treeRows: { icon: GlyphName; text: string; level: number }[] = [
  { icon: "part", text: "STAR_RING_NEW.PRT", level: 0 },
  { icon: "datumPlane", text: "RIGHT", level: 1 },
  { icon: "datumPlane", text: "TOP", level: 1 },
  { icon: "datumPlane", text: "FRONT", level: 1 },
  { icon: "csys", text: "PRT_CSYS_DEF", level: 1 },
  { icon: "importFeature", text: "Import Feature id 40", level: 1 },
  { icon: "insert", text: "Insert Here", level: 1 },
];

/* ---------- parts ---------- */

const Commands = ({ items }: { items: Cmd[] }) => (
  <Stack>
    {items.map((it) => (
      <SmallButton key={it.text} disabled={it.off}>
        <Icon name={it.icon} />
        {it.text}
        {it.menu && <Caret $faded={it.off} />}
      </SmallButton>
    ))}
  </Stack>
);

const Big = ({ icon, text, menu }: { icon: GlyphName; text: string[]; menu?: boolean }) => (
  <BigButton $menu={menu}>
    <BigArt><Icon name={icon} /></BigArt>
    {text.map((t) => <span key={t}>{t}</span>)}
    {menu && <Caret />}
  </BigButton>
);

type GroupProps = { label: string; w: number; tight?: boolean; center?: boolean; children: React.ReactNode };
const Group = ({ label, w, tight, center, children }: GroupProps) => (
  <GroupBox $w={w}>
    <GroupBody $tight={tight} $center={center}>{children}</GroupBody>
    <GroupLabel>{label}<Caret /></GroupLabel>
  </GroupBox>
);

const Quick = ({ icon, label, w }: { icon: GlyphName; label: string; w?: number }) => (
  <IconButton aria-label={label} $w={w}><Icon name={icon} /></IconButton>
);
const QuickMenu = ({ label, faded }: { label: string; faded?: boolean }) => (
  <IconButton aria-label={label} $w={14}><Caret $faded={faded} /></IconButton>
);

export default function App() {
  return (
    <Shell>
      <GlobalStyle />
      <TitleBar>
        <Quick icon="app" label="Creo Parametric" />
        <Rule />
        <Quick icon="newFile" label="New" />
        <Quick icon="open" label="Open" />
        <Quick icon="save" label="Save" />
        <Quick icon="undo" label="Undo" />
        <QuickMenu label="Undo history" faded />
        <Quick icon="redo" label="Redo" />
        <QuickMenu label="Redo history" faded />
        <Quick icon="regenSmall" label="Regenerate" />
        <Quick icon="windows" label="Windows" />
        <QuickMenu label="Window list" />
        <Quick icon="closeFolder" label="Close" />
        <Rule />
        <Quick icon="customize" label="Customize" w={18} />
        <Title>STAR_RING_NEW (Active) - Creo Parametric</Title>
        <Quick icon="minimize" label="Minimize" w={26} />
        <Quick icon="restore" label="Restore" w={27} />
        <Quick icon="close" label="Close window" w={26} />
      </TitleBar>

      <TabRow>
        <Tab $file>File<Caret /></Tab>
        {tabs.map((t, i) => <Tab key={t} $active={i === 0}>{t}</Tab>)}
        <TabTools>
          <Quick icon="chevron" label="Collapse ribbon" w={20} />
          <Quick icon="search" label="Search" />
          <Quick icon="learn" label="Learning" />
          <QuickMenu label="Learning menu" />
          <Quick icon="help" label="Help" />
        </TabTools>
      </TabRow>

      <Ribbon>
        <Group label="Operations" w={160} tight>
          <SplitButton>
            <BigArt><Icon name="regenerate" /></BigArt>
            Regenerate
            <Caret />
          </SplitButton>
          <Commands items={[c("copy", "Copy", "x"), c("paste", "Paste", "mx"), c("delete", "Delete", "mx")]} />
        </Group>
        <Group label="Get Data" w={157}>
          <Commands items={[c("udf", "User-Defined Feature"), c("copyGeom", "Copy Geometry"), c("shrink", "Shrinkwrap")]} />
        </Group>
        <Group label="Datum" w={236}>
          <Big icon="plane" text={["Plane"]} />
          <Commands items={[c("axis", "Axis"), c("point", "Point", "m"), c("csys", "Coordinate System")]} />
          <Big icon="sketch" text={["Sketch"]} />
        </Group>
        <Group label="Shapes" w={161}>
          <Big icon="extrude" text={["Extrude"]} />
          <Commands items={[c("revolve", "Revolve"), c("sweep", "Sweep", "m"), c("sweptBlend", "Swept Blend")]} />
        </Group>
        <Group label="Engineering" w={167}>
          <Commands items={[c("hole", "Hole"), c("round", "Round", "m"), c("chamfer", "Chamfer", "m")]} />
          <Commands items={[c("draft", "Draft", "m"), c("shell", "Shell"), c("rib", "Rib", "m")]} />
        </Group>
        <Group label="Editing" w={276}>
          <Big icon="pattern" text={["Pattern"]} menu />
          <Commands items={[c("mirror", "Mirror", "x"), c("trim", "Trim", "x"), c("merge", "Merge", "x")]} />
          <Commands items={[c("extend", "Extend", "x"), c("offset", "Offset", "x"), c("intersect", "Intersect", "x")]} />
          <Commands items={[c("project", "Project"), c("thicken", "Thicken", "x"), c("solidify", "Solidify", "x")]} />
        </Group>
        <Group label="Surfaces" w={152}>
          <Big icon="boundary" text={["Boundary", "Blend"]} />
          <Commands items={[c("fill", "Fill"), c("style", "Style"), c("freestyle", "Freestyle")]} />
        </Group>
        <Group label="Model Intent" w={94} center>
          <Big icon="component" text={["Component", "Interface"]} />
        </Group>
        <GroupFill />
      </Ribbon>

      <Main>
        <Side>
          <SideTabs>
            <SideTab $active aria-label="Model Tree"><Icon name="tree" /></SideTab>
            <SideTab aria-label="Folder Browser"><Icon name="folders" /></SideTab>
            <SideTab aria-label="Favorites"><Icon name="favorites" /></SideTab>
          </SideTabs>
          <Panel>
            <PanelHead>
              <PanelTitle>Model Tree</PanelTitle>
              <Quick icon="tools" label="Settings" w={28} />
              <QuickMenu label="Settings menu" />
              <Quick icon="options" label="Show" w={28} />
              <QuickMenu label="Show menu" />
            </PanelHead>
            <Tree>
              {treeRows.map((r) => (
                <TreeRow key={r.text} $level={r.level}>
                  <TreeArt><Icon name={r.icon} /></TreeArt>
                  {r.text}
                </TreeRow>
              ))}
            </Tree>
          </Panel>
        </Side>
        <Canvas>
          <ViewBar>
            {viewTools.map((v) => (
              <ViewButton key={v.label} aria-label={v.label} $on={v.on} $menu={v.menu}>
                <Icon name={v.icon} />
                {v.menu && <Corner />}
              </ViewButton>
            ))}
          </ViewBar>
          <Ring />
        </Canvas>
      </Main>

      <StatusBar>
        <StatusToggle $on aria-label="Navigator"><Icon name="treeSmall" /></StatusToggle>
        <StatusToggle aria-label="Browser"><Icon name="browser" /></StatusToggle>
        <StatusRule $before={6} $after={5} />
        <Message>{"Processing star_ring_New.stp. Step 52:  100 percent completed."}</Message>
        <StatusRule $after={34} />
        <StatusRule $after={3} />
        <Light $on />
        <Light />
        <Light />
        <StatusRule $after={1} />
        <FindButton aria-label="Find"><Icon name="find" /></FindButton>
        <StatusRule $after={0} />
        <Picker>
          <PickerSelect aria-label="Selection filter" defaultValue="Smart">
            <option>Smart</option>
          </PickerSelect>
          <PickerArrow><Caret /></PickerArrow>
        </Picker>
      </StatusBar>
    </Shell>
  );
}
